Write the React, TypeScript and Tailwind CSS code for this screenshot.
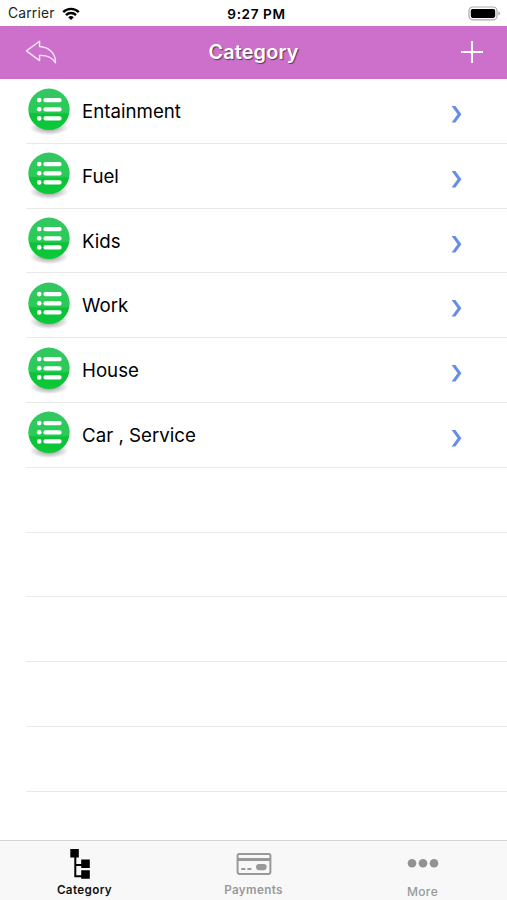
const categories = ["Entainment", "Fuel", "Kids", "Work", "House", "Car , Service"];
const emptyRows = [0, 1, 2, 3, 4];

function WifiIcon() {
  return (
    <svg width="18" height="14" viewBox="0 0 18 14" className="ml-[7px]" fill="none" stroke="#000" strokeWidth="2.4">
      <path d="M1.2 5.1a11.1 11.1 0 0 1 15.6 0" />
      <path d="M4 8.1a7.1 7.1 0 0 1 10 0" />
      <path d="M9 13 6.2 10.3a4 4 0 0 1 5.6 0Z" fill="#000" stroke="none" />
    </svg>
  );
}

function BatteryIcon() {
  return (
    <svg width="33" height="15" viewBox="0 0 33 15">
      <rect x="1" y="1" width="28" height="12.8" rx="3.8" fill="#fff" stroke="#a9a9a9" strokeWidth="1.2" />
      <rect x="2.8" y="2.9" width="24.4" height="9" rx="1.8" fill="#000" />
      <path d="M30.5 5.3c1.8.8 1.8 3.4 0 4.2Z" fill="#8d8d8d" />
    </svg>
  );
}

function BackIcon() {
  return (
    <svg width="34" height="28" viewBox="0 0 34 28" fill="none" stroke="#fbe6fb" strokeWidth="1.4" strokeLinejoin="round">
      <path d="M2.4 12.9 15.6 3.2v5.3c9.2.6 16.2 6.5 15.9 16.3-3.5-5.8-9-7.7-15.9-7.4v5.2Z" />
    </svg>
  );
}

function ListBadge() {
  return (
    <svg width="46" height="50" viewBox="0 0 46 50">
      <defs>
        <linearGradient id="badge" x1="0" y1="0" x2="0" y2="1">
          <stop offset="0" stopColor="#33c763" />
          <stop offset="0.57" stopColor="#29cc55" />
          <stop offset="0.62" stopColor="#0dc039" />
          <stop offset="1" stopColor="#0bcb38" />
        </linearGradient>
        <radialGradient id="shade">
          <stop offset="0.3" stopColor="#000" stopOpacity="0.32" />
          <stop offset="1" stopColor="#000" stopOpacity="0" />
        </radialGradient>
      </defs>
      <ellipse cx="23" cy="40.5" rx="19.5" ry="7.8" fill="url(#shade)" />
      <circle cx="23" cy="22.3" r="20.7" fill="url(#badge)" />
      <g fill="#fff">
        <circle cx="13.2" cy="13.1" r="2.3" />
        <circle cx="13.2" cy="22.3" r="2.3" />
        <circle cx="13.2" cy="31.4" r="2.3" />
        <rect x="17.4" y="11" width="18.2" height="4.2" rx="2" />
        <rect x="17.4" y="20.2" width="18.2" height="4.2" rx="2" />
        <rect x="17.4" y="29.3" width="18.2" height="4.2" rx="2" />
      </g>
    </svg>
  );
}

function Chevron() {
  return (
    <svg width="14" height="20" viewBox="0 0 14 20" fill="#668de9">
      <path d="M1.6 2h3.8l6 8.2-6 8.2H1.6l6-8.2Z" />
    </svg>
  );
}

function TreeIcon() {
  return (
    <svg width="24" height="32" viewBox="0 0 24 32">
      <path d="M6.3 8v20.2H14M6.3 17.1H14" fill="none" stroke="#000" strokeWidth="2" />
      <path d="M1.3 1h8.5v8.5H1.3zM12.2 11.5h8.6v8.4h-8.6zM12.2 22.3h8.6v8.4h-8.6z" />
    </svg>
  );
}

function CardIcon() {
  return (
    <svg width="36" height="24" viewBox="0 0 36 24">
      <rect x="1.6" y="1.9" width="32.8" height="20" rx="1.8" fill="none" stroke="#999" strokeWidth="2" />
      <path d="M1.6 6h32.8v3H1.6zM5.3 16h4v2h-4zM11.4 16h4v2h-4z" fill="#999" />
      <rect x="20" y="12" width="10.7" height="6.2" rx="3.1" fill="#999" />
    </svg>
  );
}

export default function App() {
  return (
    <div className="flex h-[900px] w-[507px] flex-col overflow-hidden bg-white font-['Inter','Liberation_Sans',sans-serif] text-black">
      <div className="grid h-[25.5px] shrink-0 grid-cols-3 items-center pt-[2px]">
        <div className="flex items-center pl-2 text-[13.8px] tracking-[0.2px] text-[#222]">
          <span>Carrier</span>
          <WifiIcon />
        </div>
        <span className="pl-[6px] text-center text-[13.6px] font-semibold tracking-[0.6px]">9:27 PM</span>
        <div className="flex justify-end pr-[6px]">
          <BatteryIcon />
        </div>
      </div>

      <header className="grid h-[53.5px] shrink-0 grid-cols-3 items-center bg-[#cc70cb] px-6">
        <BackIcon />
        <h1 className="mt-[2px] text-center text-[19.8px] font-semibold tracking-[0.2px] text-white [text-shadow:1px_1px_1px_#0000008c]">
          Category
        </h1>
        <svg width="22" height="22" viewBox="0 0 22 22" stroke="#fff" strokeWidth="2" className="justify-self-end">
          <path d="M11 0v22M0 11h22" />
        </svg>
      </header>

      <main className="min-h-0 flex-1 overflow-hidden pl-[26px]">
        {categories.map((name) => (
          <div key={name} className="flex h-[64.8px] items-start border-b border-[#eaeaea]">
            <div className="mt-[7.5px]">
              <ListBadge />
            </div>
            <span className="mt-[19px] ml-[10px] flex-1 text-[18.7px] leading-[27px]">{name}</span>
            <div className="mt-[25px] mr-[43px]">
              <Chevron />
            </div>
          </div>
        ))}
        {emptyRows.map((row) => (
          <div key={row} className="h-[64.8px] border-b border-[#eaeaea]" />
        ))}
      </main>

      <nav className="grid h-[60px] shrink-0 grid-cols-3 border-t border-[#d4d4d4] bg-[#f8f8f8] text-[11.7px] font-semibold tracking-[0.35px] text-[#999]">
        <div className="flex flex-col items-center pt-[7px] text-[#111]">
          <div className="mr-[8px]">
            <TreeIcon />
          </div>
          <span className="mt-px leading-[19px]">Category</span>
        </div>
        <div className="flex flex-col items-center pt-[11px]">
          <CardIcon />
          <span className="mt-[5px] leading-[19px]">Payments</span>
        </div>
        <div className="flex flex-col items-center pt-[16px]">
          <svg width="32" height="12" viewBox="0 0 32 12" fill="#929292">
            <circle cx="5" cy="6.3" r="4.3" />
            <circle cx="16" cy="6.3" r="4.3" />
            <circle cx="27" cy="6.3" r="4.3" />
          </svg>
          <span className="mt-[13px] text-[12px] leading-[19px] font-medium">More</span>
        </div>
      </nav>
    </div>
  );
}
